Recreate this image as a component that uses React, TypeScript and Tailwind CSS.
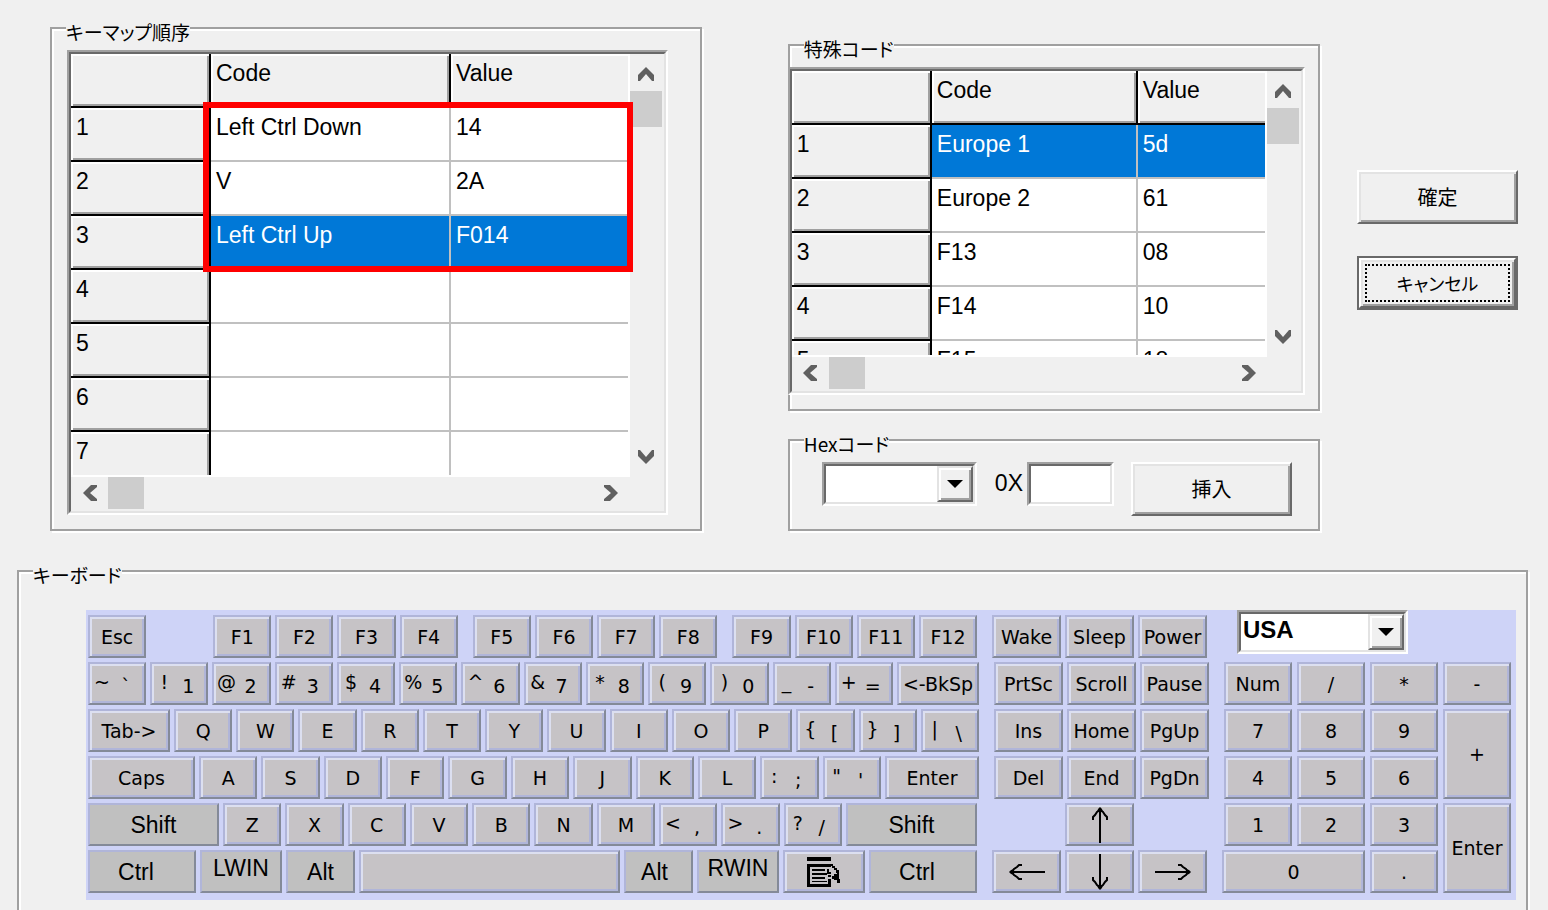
import { useState, type ReactNode } from "react"
import clsx from "clsx"

interface CodeRow {
  code: string
  value: string
}

interface KeyDef {
  label?: string
  shifted?: string
  size?: string
  gap?: string
  variant?: "normal" | "modifier"
  icon?: ReactNode
}

const sequence: CodeRow[] = [
  { code: "Left Ctrl Down", value: "14" },
  { code: "V", value: "2A" },
  { code: "Left Ctrl Up", value: "F014" },
  { code: "", value: "" },
  { code: "", value: "" },
  { code: "", value: "" },
  { code: "", value: "" },
]

const specialCodes: CodeRow[] = [
  { code: "Europe 1", value: "5d" },
  { code: "Europe 2", value: "61" },
  { code: "F13", value: "08" },
  { code: "F14", value: "10" },
  { code: "F15", value: "18" },
]

const letters = (text: string): KeyDef[] => text.split("").map((label) => ({ label }))

// "!1" -> shifted "!", base "1"
const pairs = (text: string): KeyDef[] =>
  text.split(" ").map((pair) => ({ shifted: pair[0], label: pair[1] }))

const MenuIcon = () => (
  <svg viewBox="0 0 34 30" className="h-[30px] w-[34px]" shapeRendering="crispEdges" aria-hidden="true">
    <path d="M0 0h24v4H0z" />
    <path d="M0 7h24v3H3v17h18v-5h3v8H0z" />
    <path d="M5 12h13v2H5zM5 16h15v2H5zM5 20h13v2H5zM5 24h15v1H5z" />
    <path d="M22 7h4v2h2v2h2v2h2v3h-3v-3h-2v-2h-2v-2h-3z" />
    <path d="M20 12h2v3h2v2h-4zM21 18h3v2h-3z" />
    <path d="M30 15h2v7h1v4h-3v-3h-3v-1h-2v-3h2v-2h3z" />
  </svg>
)

const Arrow = ({ className }: { className?: string }) => (
  <svg
    viewBox="0 0 38 18"
    className={clsx("h-[18px] w-[38px] fill-none stroke-black stroke-2", className)}
    aria-hidden="true"
  >
    <path d="M37 9H2M14 2H11L9 4L6 6L4 9L6 12L9 14L11 16H14" />
    <path d="M1 9L3 7L6 6V12L3 11Z" className="fill-black stroke-none" />
  </svg>
)

const mainRows: KeyDef[][] = [
  [
    { label: "Esc" },
    { label: "F1", gap: "ml-[63px]" },
    { label: "F2" },
    { label: "F3" },
    { label: "F4" },
    { label: "F5", gap: "ml-[11px]" },
    { label: "F6" },
    { label: "F7" },
    { label: "F8" },
    { label: "F9", gap: "ml-[11px]" },
    { label: "F10" },
    { label: "F11" },
    { label: "F12" },
  ],
  [...pairs("~` !1 @2 #3 $4 %5 ^6 &7 *8 (9 )0 _- +="), { label: "<-BkSp", size: "w-[82px]" }],
  [{ label: "Tab->", size: "w-[82px]" }, ...letters("QWERTYUIOP"), ...pairs("{[ }] |\\")],
  [
    { label: "Caps", size: "w-[107px]" },
    ...letters("ASDFGHJKL"),
    ...pairs(":; \"'"),
    { label: "Enter", size: "w-[94px]" },
  ],
  [
    { label: "Shift", size: "w-[131px]", variant: "modifier" },
    ...letters("ZXCVBNM"),
    ...pairs("<, >. ?/"),
    { label: "Shift", size: "w-[131px]", variant: "modifier" },
  ],
  [
    { label: "Ctrl", size: "w-[108px] pr-3", variant: "modifier" },
    { label: "LWIN", size: "w-[82px] pb-2", variant: "modifier" },
    { label: "Alt", size: "w-[69px]", variant: "modifier" },
    { label: "" },
    { label: "Alt", size: "w-[69px] pr-2", variant: "modifier" },
    { label: "RWIN", size: "w-[82px] pb-2", variant: "modifier" },
    { label: "Menu", size: "w-[82px]", icon: <MenuIcon /> },
    { label: "Ctrl", size: "w-[108px] pr-3", variant: "modifier" },
  ],
]

const navRows: (KeyDef | null)[][] = [
  [{ label: "Wake" }, { label: "Sleep" }, { label: "Power" }],
  [{ label: "PrtSc" }, { label: "Scroll" }, { label: "Pause" }],
  [{ label: "Ins" }, { label: "Home" }, { label: "PgUp" }],
  [{ label: "Del" }, { label: "End" }, { label: "PgDn" }],
  [null, { label: "Up", icon: <Arrow className="rotate-90" /> }, null],
  [
    { label: "Left", icon: <Arrow /> },
    { label: "Down", icon: <Arrow className="-rotate-90" /> },
    { label: "Right", icon: <Arrow className="rotate-180" /> },
  ],
]

const numpad: KeyDef[] = [
  { label: "Num" },
  { label: "/" },
  { label: "*" },
  { label: "-" },
  ...letters("789"),
  { label: "+", size: "row-span-2" },
  ...letters("456"),
  ...letters("123"),
  { label: "Enter", size: "row-span-2" },
  { label: "0", size: "col-span-2 -ml-0.5" },
  { label: "." },
]

function Key({ def }: { def: KeyDef }) {
  const modifier = def.variant === "modifier"
  return (
    <button
      type="button"
      aria-label={def.icon ? def.label : def.label === "" ? "Space" : undefined}
      className={clsx(
        "flex min-h-[43px] min-w-0 items-center justify-center border-2 border-t-[#b0b5d9] border-l-[#b0b5d9] border-r-[#848a98] border-b-[#848a98] whitespace-nowrap text-black",
        modifier
          ? "bg-[#c0c0c0] font-['Liberation_Sans',sans-serif] text-[23px] leading-6"
          : "bg-[#c6c3c6] font-['DejaVu_Sans',sans-serif] text-[19px] leading-6 shadow-[inset_2px_2px_0_#dcdff0,inset_-2px_-2px_0_#b0b5d9]",
        def.size ?? "flex-1",
        def.gap,
      )}
    >
      {def.icon}
      {!def.icon && def.shifted && (
        <span className="flex w-full gap-1 pl-0.5">
          <span className="w-5 pb-1 text-center">{def.shifted}</span>
          <span className="w-5 pt-1 text-center">{def.label}</span>
        </span>
      )}
      {!def.icon && !def.shifted && def.label}
    </button>
  )
}

function GroupBox({ title, className, children }: { title: string; className?: string; children: ReactNode }) {
  return (
    <fieldset
      className={clsx(
        "min-w-0 border-2 border-[#a0a0a0] shadow-[inset_2px_2px_0_#fff,2px_2px_0_#fff]",
        className,
      )}
    >
      <legend className="ml-[14px] bg-[#f0f0f0] pt-2 font-['Noto_Sans_CJK_JP',sans-serif] text-[19px] leading-6 [font-feature-settings:'palt']">
        {title}
      </legend>
      {children}
    </fieldset>
  )
}

function Sunken({ className, children }: { className?: string; children: ReactNode }) {
  return (
    <div className={clsx("border-2 border-t-[#a0a0a0] border-l-[#a0a0a0] border-r-white border-b-white", className)}>
      <div className="h-full border-2 border-t-[#696969] border-l-[#696969] border-r-[#e3e3e3] border-b-[#e3e3e3]">
        {children}
      </div>
    </div>
  )
}

const Chevron = ({ className }: { className?: string }) => (
  <svg viewBox="0 0 18 14" className={clsx("h-[14px] w-[18px] fill-[#606060]", className)} aria-hidden="true">
    <path d="M9 0L17 8V14H15L9 7L3 14H1V8Z" />
  </svg>
)

interface CodeGridProps {
  name: string
  rows: CodeRow[]
  initial: number
  viewHeight: string
  codeWidth: string
}

function CodeGrid({ name, rows, initial, viewHeight, codeWidth }: CodeGridProps) {
  const [selected, setSelected] = useState(initial)
  const base = "border-b-2 border-black bg-[#f0f0f0] px-[5px] pt-[5px] text-left align-top font-normal"
  const fixed = clsx(base, "border-r-2 shadow-[inset_2px_2px_0_#fff,inset_-2px_-2px_0_#a0a0a0]")
  const last = clsx(base, "shadow-[inset_2px_2px_0_#fff,inset_0_-2px_0_#a0a0a0]")

  return (
    <div className="font-['Liberation_Sans',sans-serif] text-[23px] leading-7">
      <div className="flex">
        <div className="min-w-0 flex-1 bg-white pr-0.5 pb-0.5">
          <div className={clsx("overflow-hidden", viewHeight)}>
            <table className="w-full table-fixed border-separate border-spacing-0" aria-label={name}>
              <colgroup>
                <col className="w-[140px]" />
                <col className={codeWidth} />
                <col />
              </colgroup>
              <thead>
                <tr className="h-[54px]">
                  <td className={fixed}></td>
                  <th scope="col" className={fixed}>Code</th>
                  <th scope="col" className={last}>Value</th>
                </tr>
              </thead>
              <tbody>
                {rows.map((row, i) => {
                  const cell = clsx(
                    "border-b-2 border-[#c0c0c0] px-[5px] pt-[5px] align-top",
                    i === selected ? "bg-[#0078d7] text-white" : "bg-white",
                  )
                  return (
                    <tr key={i} className="h-[54px]" onClick={() => setSelected(i)}>
                      <th scope="row" className={fixed}>{i + 1}</th>
                      <td className={clsx(cell, "border-r-2")}>{row.code}</td>
                      <td className={cell}>{row.value}</td>
                    </tr>
                  )
                })}
              </tbody>
            </table>
          </div>
        </div>
        {/* Vertical scrollbar */}
        <div className="mr-0.5 flex w-8 flex-col">
          <button type="button" aria-label="Scroll up" className="flex h-[37px] items-center justify-center pt-[3px]">
            <Chevron />
          </button>
          <div className="h-9 bg-[#cdcdcd]"></div>
          <button type="button" aria-label="Scroll down" className="mt-auto flex h-[37px] items-center justify-center pb-[3px]">
            <Chevron className="rotate-180" />
          </button>
        </div>
      </div>
      {/* Horizontal scrollbar */}
      <div className="mr-[34px] mb-0.5 flex h-8">
        <button type="button" aria-label="Scroll left" className="flex w-[37px] items-center justify-center">
          <Chevron className="-rotate-90" />
        </button>
        <div className="w-9 bg-[#cdcdcd]"></div>
        <button type="button" aria-label="Scroll right" className="ml-auto flex w-[37px] items-center justify-center">
          <Chevron className="rotate-90" />
        </button>
      </div>
    </div>
  )
}

function Combo({ label, options, className, bold }: { label: string; options: string[]; className: string; bold?: boolean }) {
  return (
    <Sunken className={clsx("bg-white", className)}>
      <div className="relative h-full">
        <select
          aria-label={label}
          className={clsx(
            "block h-full w-full appearance-none bg-white px-0.5 pb-1 font-['Liberation_Sans',sans-serif] text-2xl leading-7 outline-none",
            bold && "font-bold",
          )}
        >
          {options.map((option) => (
            <option key={option}>{option}</option>
          ))}
        </select>
        <span className="pointer-events-none absolute inset-y-0 right-0 flex w-9 items-center justify-center border-2 border-t-[#e3e3e3] border-l-[#e3e3e3] border-r-[#696969] border-b-[#696969] bg-[#f0f0f0] shadow-[inset_2px_2px_0_#fff,inset_-2px_-2px_0_#a0a0a0]">
          <svg viewBox="0 0 16 8" className="h-2 w-4" aria-hidden="true">
            <path d="M0 0H16L8 8Z" />
          </svg>
        </span>
      </div>
    </Sunken>
  )
}

const raised =
  "border-2 border-t-white border-l-white border-r-[#696969] border-b-[#696969] bg-[#f0f0f0] font-['Noto_Sans_CJK_JP',sans-serif] leading-6 [font-feature-settings:'palt'] shadow-[inset_2px_2px_0_#e3e3e3,inset_-2px_-2px_0_#a0a0a0]"

export default function App() {
  const [hex, setHex] = useState("")

  return (
    <div className="flex min-h-screen flex-col bg-[#f0f0f0] text-black">
      <div className="flex items-start pt-3 pr-[30px] pl-[50px]">
        {/* Key map sequence */}
        <GroupBox title="キーマップ順序" className="flex-[650_1_0%]">
          <div className="pt-[6px] pr-[32px] pb-[14px] pl-[15px]">
            <Sunken>
              <div className="relative">
                <CodeGrid
                  name="キーマップ順序"
                  rows={sequence}
                  initial={2}
                  viewHeight="h-[421px]"
                  codeWidth="w-[240px]"
                />
                <div className="pointer-events-none absolute top-12 right-[31px] left-[132px] h-[170px] border-[6px] border-[#ff0000]"></div>
              </div>
            </Sunken>
          </div>
        </GroupBox>

        <div className="ml-[86px] flex min-w-0 flex-[534_1_0%] flex-col gap-[13px] pt-[17px]">
          {/* Special codes */}
          <GroupBox title="特殊コード">
            <div className="-ml-0.5 pt-[6px] pr-[13px] pb-[14px]">
              <Sunken>
                <CodeGrid
                  name="特殊コード"
                  rows={specialCodes}
                  initial={0}
                  viewHeight="h-[284px]"
                  codeWidth="w-[206px]"
                />
              </Sunken>
            </div>
          </GroupBox>

          {/* Hex code */}
          <GroupBox title="Hexコード">
            <div className="flex items-start pt-[6px] pr-[26px] pb-[13px] pl-[32px]">
              <Combo label="Hexコード" options={[""]} className="h-11 w-[155px]" />
              <label htmlFor="hex" className="ml-auto pt-[7px] pr-1 font-['Liberation_Sans',sans-serif] text-[23px] leading-7">
                0X
              </label>
              <Sunken className="h-11 w-[87px] bg-white">
                <input
                  id="hex"
                  type="text"
                  value={hex}
                  onChange={(e) => setHex(e.target.value)}
                  className="block h-full w-full bg-white px-1 font-['Liberation_Sans',sans-serif] text-[23px] outline-none"
                />
              </Sunken>
              <button type="button" className={clsx(raised, "ml-[17px] h-[54px] w-[161px] text-xl")}>
                挿入
              </button>
            </div>
          </GroupBox>
        </div>

        {/* Dialog buttons */}
        <div className="ml-[37px] flex w-[161px] flex-col gap-8 pt-[158px]">
          <button type="button" onClick={() => setHex("")} className={clsx(raised, "h-[54px] text-xl")}>
            確定
          </button>
          <div className="flex border-2 border-[#696969]">
            <button type="button" className={clsx(raised, "h-[50px] w-full p-1 text-lg")}>
              <span className="flex h-full items-center justify-center border-2 border-dotted border-black">
                キャンセル
              </span>
            </button>
          </div>
        </div>
      </div>

      {/* Keyboard */}
      <GroupBox title="キーボード" className="mt-6 mr-5 ml-[17px] flex-1 border-b-0">
        <div className="pt-[23px] pr-[10px] pb-[10px] pl-[67px]">
          <div className="flex gap-[13px] bg-[#ced3f7] pr-[5px] pb-[7px] pl-0.5">
            <div className="flex min-w-0 flex-[891_1_0%] flex-col gap-1 pt-[5px]">
              {mainRows.map((row, i) => (
                <div key={i} className={clsx("flex gap-1", (i === 0 || i > 3) && "pr-0.5")}>
                  {row.map((def, j) => (
                    <Key key={j} def={def} />
                  ))}
                </div>
              ))}
            </div>

            <div className="flex min-w-0 flex-[217_1_0%] flex-col gap-1 pt-[5px]">
              {navRows.map((row, i) => (
                <div key={i} className={clsx("grid grid-cols-3 gap-1", i === 0 || i > 3 ? "pr-0.5" : "pl-0.5")}>
                  {row.map((def, j) => (def ? <Key key={j} def={def} /> : <span key={j}></span>))}
                </div>
              ))}
            </div>

            <div className="flex min-w-0 flex-[287_1_0%] flex-col gap-2 pl-0.5">
              <Combo label="Keyboard layout" options={["USA", "Japan"]} className="ml-[13px] h-11 w-[171px]" bold />
              <div className="grid grid-cols-4 gap-x-[5px] gap-y-1">
                {numpad.map((def, i) => (
                  <Key key={i} def={def} />
                ))}
              </div>
            </div>
          </div>
        </div>
      </GroupBox>
    </div>
  )
}
